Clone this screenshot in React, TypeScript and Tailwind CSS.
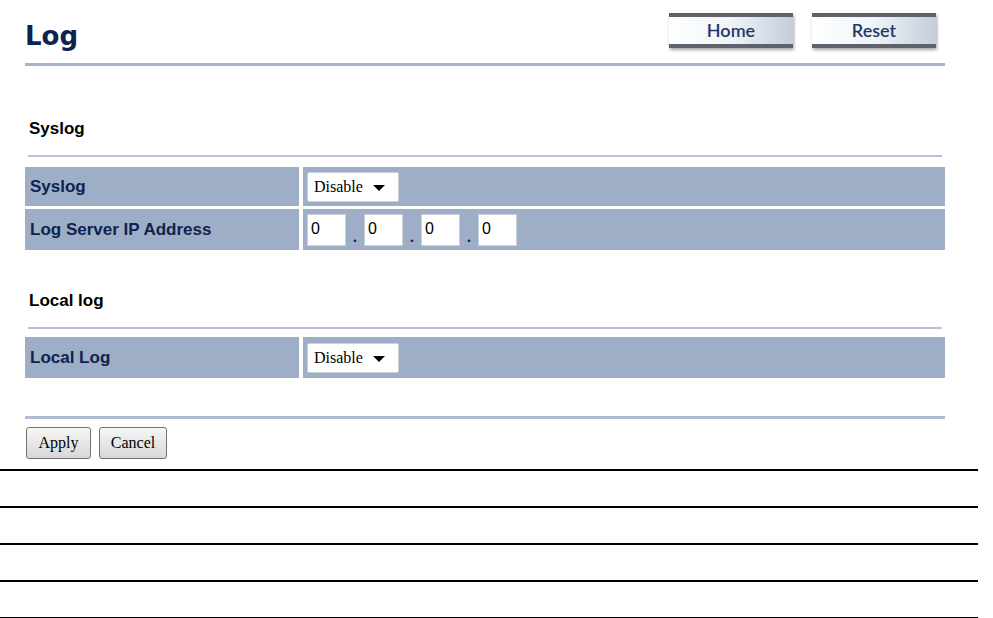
import { ReactNode } from "react";

const navy = "text-[#0d2350]";

const ImgButton = ({ children }: { children: ReactNode }) => (
  <div className="w-[124px] h-[35px] flex flex-col shadow-[1px_2px_3px_rgba(0,0,0,0.35)]">
    <div className="h-[4px] bg-[#5c636c]" />
    <div className="flex-1 flex items-center justify-center bg-gradient-to-r from-white via-[#f0f3f8] to-[#c5cddb] font-['Lato'] font-semibold text-[18px] text-[#1c3a64]">
      {children}
    </div>
    <div className="h-[4px] bg-[#5c636c]" />
  </div>
);

const Select = () => (
  <div className="w-[92px] h-[30px] bg-white border border-[#c9d1dc] rounded-[2px] flex items-center pl-[6px] font-['Liberation_Serif',serif] text-[16px] text-black">
    <span>Disable</span>
    <span className="ml-[10px] mt-[3px] w-0 h-0 border-l-[6px] border-r-[6px] border-t-[6px] border-l-transparent border-r-transparent border-t-black" />
  </div>
);

const IpBox = () => (
  <div className="w-[39px] h-[32px] bg-white border border-[#c9d1dc] pl-[3px] pt-[4px] font-['Liberation_Sans',sans-serif] text-[16px] leading-[20px] text-black">
    0
  </div>
);

const Dot = () => (
  <span className="w-[18px] text-center text-[#0d2350] font-bold text-[14px] mt-[14px]">.</span>
);

const Row = ({ label, h, children }: { label: string; h: string; children: ReactNode }) => (
  <div className={`flex gap-[4px] ${h}`}>
    <div className={`w-[274px] bg-[#9eaec6] flex items-center pl-[5px] font-['Liberation_Sans',sans-serif] font-bold text-[17px] ${navy}`}>
      {label}
    </div>
    <div className="flex-1 bg-[#9eaec6] flex items-center pl-[4px]">{children}</div>
  </div>
);

const Section = ({ title }: { title: string }) => (
  <div className="font-['Liberation_Sans',sans-serif] font-bold text-[17px] leading-[20px] text-black pl-[4px]">
    {title}
  </div>
);

const FormButton = ({ children, w }: { children: ReactNode; w: string }) => (
  <div className={`${w} h-[32px] rounded-[3px] border border-[#707070] bg-gradient-to-b from-[#f6f6f6] to-[#d8d8d8] flex items-center justify-center font-['Liberation_Serif',serif] text-[16px] text-black`}>
    {children}
  </div>
);

export default function App() {
  return (
    <div className="w-[993px] h-[618px] bg-white overflow-hidden">
      <div className="pl-[25px] w-[945px] pt-[13px]">
        <div className="flex justify-between h-[35px]">
          <h1 className={`pt-[7px] font-['DejaVu_Sans',sans-serif] font-bold text-[26px] leading-[32px] ${navy}`}>Log</h1>
          <div className="flex gap-[19px] pr-[9px]">
            <ImgButton>Home</ImgButton>
            <ImgButton>Reset</ImgButton>
          </div>
        </div>
        <div className="mt-[15px] h-[3px] bg-[#a4b3c9]" />

        <div className="mt-[53px]">
          <Section title="Syslog" />
        </div>
        <div className="mt-[16px] mx-[3px] h-[2px] bg-[#b6c2d3]" />
        <div className="mt-[10px] flex flex-col gap-[3px]">
          <Row label="Syslog" h="h-[39px]">
            <Select />
          </Row>
          <Row label="Log Server IP Address" h="h-[41px]">
            <div className="flex items-center">
              <IpBox />
              <Dot />
              <IpBox />
              <Dot />
              <IpBox />
              <Dot />
              <IpBox />
            </div>
          </Row>
        </div>

        <div className="mt-[41px]">
          <Section title="Local log" />
        </div>
        <div className="mt-[16px] mx-[3px] h-[2px] bg-[#b6c2d3]" />
        <div className="mt-[8px]">
          <Row label="Local Log" h="h-[41px]">
            <Select />
          </Row>
        </div>

        <div className="mt-[38px] h-[3px] bg-[#b0bdd0]" />
        <div className="mt-[8px] flex gap-[8px] pl-[1px]">
          <FormButton w="w-[65px]">Apply</FormButton>
          <FormButton w="w-[68px]">Cancel</FormButton>
        </div>
      </div>

      <div className="mt-[10px] w-[978px] flex flex-col">
        <div className="h-[2px] bg-black" />
        <div className="h-[35px]" />
        <div className="h-[2px] bg-black" />
        <div className="h-[35px]" />
        <div className="h-[2px] bg-black" />
        <div className="h-[35px]" />
        <div className="h-[2px] bg-black" />
        <div className="h-[35px]" />
        <div className="h-[2px] bg-black" />
      </div>
    </div>
  );
}
